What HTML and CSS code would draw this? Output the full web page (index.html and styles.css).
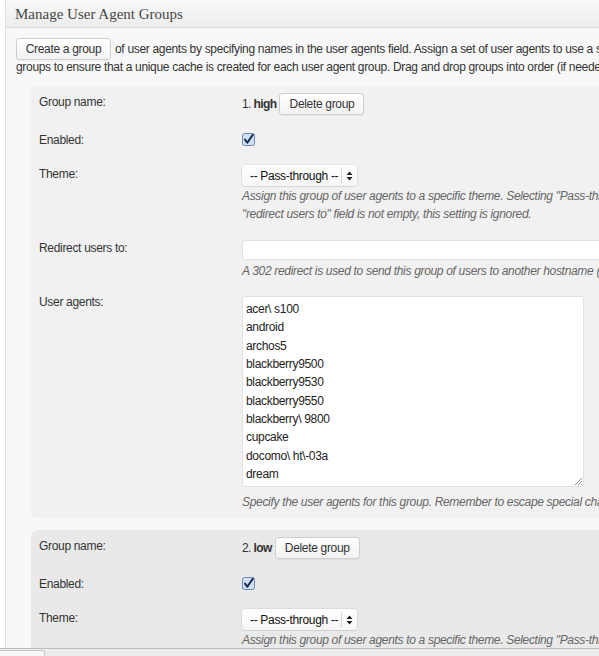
FILE: index.html
```html
<!DOCTYPE html>
<html>
<head>
<meta charset="utf-8">
<link rel="stylesheet" href="styles.css">
</head>
<body>
<div class="postbox">
  <h3 class="hndle">Manage User Agent Groups</h3>
  <div class="inside">
    <div class="intro-line">
      <button class="btn btn-create">Create a group</button>
      <span class="nowrap">of user agents by specifying names in the user agents field. Assign a set of user agents to use a specific theme, redirect them to another domain or if an existing mobile plugin is active, create user agent</span>
    </div>
    <p class="intro-line2">groups to ensure that a unique cache is created for each user agent group. Drag and drop groups into order (if needed) to determine their priority (top -&gt; down).</p>

    <div class="group group-1">
      <div class="row row-name">
        <div class="label">Group name:</div>
        <div class="value name-val"><span class="gname">1. <strong>high</strong></span><button class="btn btn-del">Delete group</button></div>
      </div>
      <div class="row row-enabled">
        <div class="label">Enabled:</div>
        <div class="value">
          <svg class="check" width="13" height="13" viewBox="0 0 13 13"><rect x="0.5" y="0.5" width="12" height="12" rx="2" fill="#cfe0f7" stroke="#6b88b8"/><path d="M3 6.5 L5.3 9.8 L10.8 1.8" fill="none" stroke="#142a4a" stroke-width="2" stroke-linecap="round" stroke-linejoin="round"/></svg>
        </div>
      </div>
      <div class="row row-theme">
        <div class="label">Theme:</div>
        <div class="value">
          <div class="select"><span class="sel-text">-- Pass-through --</span><span class="sel-arrow"><svg width="7" height="10" viewBox="0 0 7 10"><path d="M3.5 0.5 L6.5 4 L0.5 4 Z M0.5 6 L6.5 6 L3.5 9.5 Z" fill="#222"/></svg></span></div>
          <div class="desc d-theme">Assign this group of user agents to a specific theme. Selecting "Pass-through" allows any plugin(s) (e.g. mobile plugins) to properly handle requests for these user agents. If the<br>"redirect users to" field is not empty, this setting is ignored.</div>
        </div>
      </div>
      <div class="row row-redirect">
        <div class="label">Redirect users to:</div>
        <div class="value">
          <div class="input"></div>
          <div class="desc d-redirect">A 302 redirect is used to send this group of users to another hostname (domain); recommended if a 3rd party service provides a mobile version of your site.</div>
        </div>
      </div>
      <div class="row row-agents">
        <div class="label label-agents">User agents:</div>
        <div class="value">
          <div class="ta-wrap">
          <textarea class="agents" readonly>acer\ s100
android
archos5
blackberry9500
blackberry9530
blackberry9550
blackberry\ 9800
cupcake
docomo\ ht\-03a
dream
htc\ hero
htc\ magic</textarea>
          <svg class="grip" width="8" height="8" viewBox="0 0 8 8"><path d="M1 8 L8 1 M4 8 L8 4 M7 8 L8 7" stroke="#8a8a8a" stroke-width="1"/></svg>
          </div>
          <div class="desc d-agents">Specify the user agents for this group. Remember to escape special characters like spaces, dots or dashes with a backslash. Regular expressions are also supported.</div>
        </div>
      </div>
    </div>

    <div class="group group-2">
      <div class="row row-name">
        <div class="label">Group name:</div>
        <div class="value name-val"><span class="gname">2. <strong>low</strong></span><button class="btn btn-del">Delete group</button></div>
      </div>
      <div class="row row-enabled">
        <div class="label">Enabled:</div>
        <div class="value">
          <svg class="check" width="13" height="13" viewBox="0 0 13 13"><rect x="0.5" y="0.5" width="12" height="12" rx="2" fill="#cfe0f7" stroke="#6b88b8"/><path d="M3 6.5 L5.3 9.8 L10.8 1.8" fill="none" stroke="#142a4a" stroke-width="2" stroke-linecap="round" stroke-linejoin="round"/></svg>
        </div>
      </div>
      <div class="row row-theme">
        <div class="label">Theme:</div>
        <div class="value">
          <div class="select"><span class="sel-text">-- Pass-through --</span><span class="sel-arrow"><svg width="7" height="10" viewBox="0 0 7 10"><path d="M3.5 0.5 L6.5 4 L0.5 4 Z M0.5 6 L6.5 6 L3.5 9.5 Z" fill="#222"/></svg></span></div>
          <div class="desc d-theme">Assign this group of user agents to a specific theme. Selecting "Pass-through" allows any plugin(s) (e.g. mobile plugins) to properly handle requests for these user agents. If the<br>"redirect users to" field is not empty, this setting is ignored.</div>
        </div>
      </div>
    </div>
  </div>
</div>
<div class="statusbar"><div class="status-tab"></div></div>
</body>
</html>
```
FILE: styles.css
```css
html, body {
  margin: 0;
  padding: 0;
  overflow: hidden;
  background: #ffffff;
  width: 599px;
  height: 656px;
}
body {
  font-family: "Liberation Sans", Arial, sans-serif;
  font-size: 12px;
  letter-spacing: -0.32px;
  color: #333;
}
.postbox {
  margin-left: 5px;
  width: 1100px;
  border-left: 1px solid #dfdfdf;
  background: #f8f8f8;
  min-height: 700px;
}
.hndle {
  margin: 0;
  height: 28px;
  box-sizing: border-box;
  padding: 0 0 0 9px;
  line-height: 28px;
  font-family: "Liberation Serif", Georgia, serif;
  font-weight: normal;
  font-size: 15px;
  letter-spacing: 0;
  color: #464646;
  background: linear-gradient(#fafafa, #ececec);
  border-bottom: 1px solid #dcdcdc;
}
.inside {
  padding: 10px 0 0 10px;
}
.nowrap { white-space: nowrap; }
.intro-line {
  display: flex;
  align-items: center;
  gap: 4px;
  white-space: nowrap;
  height: 22px;
}
.intro-line2 {
  margin: 0;
  white-space: nowrap;
  line-height: 16px;
  margin-top: -1px;
}
.btn {
  flex-shrink: 0;
  font-family: "Liberation Sans", Arial, sans-serif;
  font-size: 12px;
  letter-spacing: -0.32px;
  color: #333;
  height: 22px;
  padding: 0;
  border: 1px solid #cfcfcf;
  border-radius: 3px;
  background: linear-gradient(#ffffff, #f2f2f2);
  box-shadow: 0 1px 0 rgba(0,0,0,0.04);
  line-height: 20px;
}
.btn-create { width: 95px; }
.btn-del { width: 85px; }
.group {
  margin-left: 15px;
  border-radius: 6px;
  padding: 7px 0 7px 8px;
  display: flex;
  flex-direction: column;
  gap: 16px;
}
.group-1 { margin-top: 11px; background: #f1f1f1; }
.group-2 { margin-top: 12px; background: #e9e9e9; }
.row {
  display: grid;
  grid-template-columns: 203px 1fr;
  align-items: start;
}
.label { line-height: 18px; white-space: nowrap; }
.label-agents { line-height: 12px; }
.value { white-space: nowrap; }
.name-val {
  display: flex;
  align-items: center;
  gap: 3px;
  height: 22px;
}
.gname { letter-spacing: -0.6px; }
.row-enabled .value { height: 18px; }
.check { display: block; margin-top: 2px; }
.select {
  width: 115px;
  height: 21px;
  box-sizing: border-box;
  border-radius: 4px;
  background: linear-gradient(#ffffff, #f6f6f6);
  box-shadow: 0 0 0 1px rgba(0,0,0,0.06), 0 1px 1px rgba(0,0,0,0.06);
  display: flex;
  align-items: center;
  color: #111;
  font-size: 12px;
}
.sel-text { padding-left: 8px; width: 91px; }
.sel-arrow {
  border-left: 1px solid #d6d6d6;
  height: 15px;
  flex: 1;
  display: flex;
  align-items: center;
  justify-content: center;
}
.sel-arrow svg { display: block; }
.desc {
  font-style: italic;
  color: #666;
  line-height: 18px;
}
.d-theme { margin-top: 1px; }
.input {
  margin-top: 1px;
  width: 500px;
  height: 20px;
  box-sizing: border-box;
  background: #fff;
  border: 1px solid #e0e0e0;
  border-radius: 3px;
}
.d-redirect { margin-top: 2px; }
.ta-wrap {
  position: relative;
  width: 342px;
  height: 191px;
}
.agents {
  display: block;
  width: 342px;
  height: 191px;
  box-sizing: border-box;
  margin: 0;
  padding: 3px 3px;
  font-family: "Liberation Sans", Arial, sans-serif;
  font-size: 12px;
  letter-spacing: -0.32px;
  line-height: 18.33px;
  color: #222;
  background: #fff;
  border: 1px solid #e2e2e2;
  border-radius: 3px;
  overflow: hidden;
  resize: none;
  outline: none;
}
.grip {
  position: absolute;
  right: 2px;
  bottom: 2px;
}
.d-agents { margin-top: 6px; }
.statusbar {
  position: fixed;
  left: 0;
  right: 0;
  bottom: 0;
  height: 7px;
  background: #ededed;
  border-top: 1px solid #bdbdbd;
}
.status-tab {
  width: 44px;
  height: 6px;
  margin-top: 1px;
  background: #f7f7f7;
  border: 1px solid #c4c4c4;
  border-left: none;
  border-bottom: none;
  border-radius: 0 3px 0 0;
}
```
